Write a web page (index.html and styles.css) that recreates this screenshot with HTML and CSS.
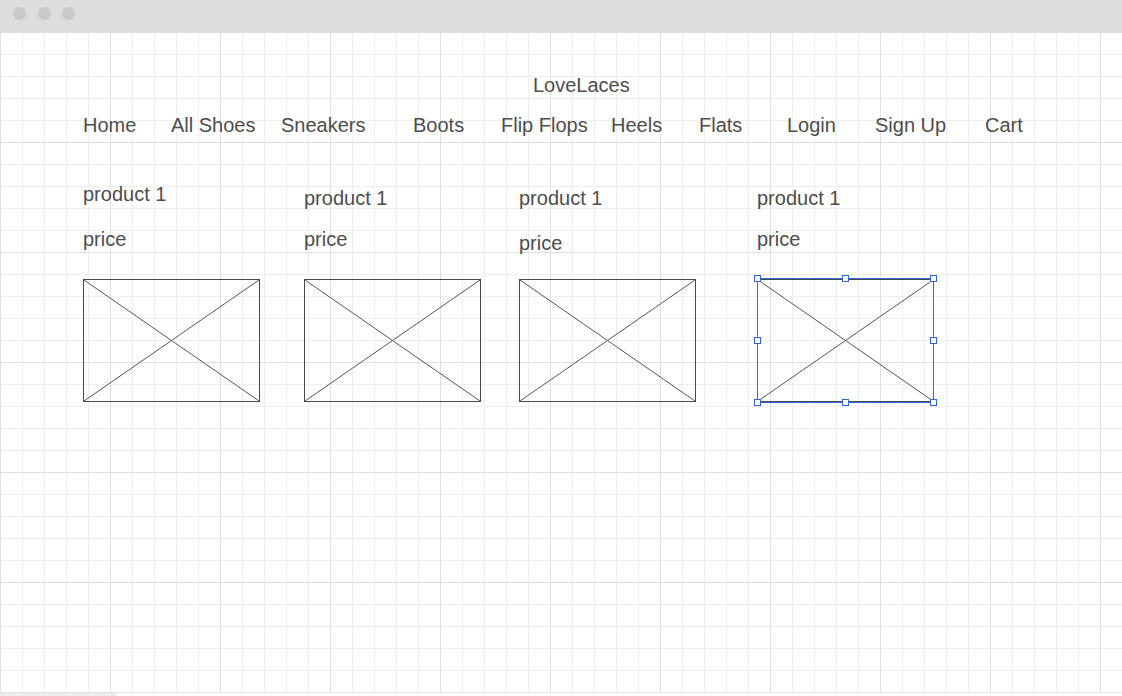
FILE: index.html
```html
<!DOCTYPE html>
<html>
<head>
    <title>LoveLaces wireframe</title>
    <link rel="stylesheet" href="styles.css">
</head>
<body>
    <div class="titlebar">
        <span class="dot"></span>
        <span class="dot"></span>
        <span class="dot"></span>
    </div>

    <div class="canvas">
        <h1 class="brand">LoveLaces</h1>

        <nav class="nav">
            <a>Home</a>
            <a>All Shoes</a>
            <a>Sneakers</a>
            <a>Boots</a>
            <a>Flip Flops</a>
            <a>Heels</a>
            <a>Flats</a>
            <a>Login</a>
            <a>Sign Up</a>
            <a>Cart</a>
        </nav>

        <div class="products">
            <div class="card">
                <p class="name">product 1</p>
                <p class="price">price</p>
                <div class="ph">
                    <svg viewBox="0 0 176 121" preserveAspectRatio="none"><line x1="0" y1="0" x2="176" y2="121"/><line x1="176" y1="0" x2="0" y2="121"/></svg>
                </div>
            </div>
            <div class="card">
                <p class="name nudge">product 1</p>
                <p class="price">price</p>
                <div class="ph">
                    <svg viewBox="0 0 176 121" preserveAspectRatio="none"><line x1="0" y1="0" x2="176" y2="121"/><line x1="176" y1="0" x2="0" y2="121"/></svg>
                </div>
            </div>
            <div class="card">
                <p class="name nudge">product 1</p>
                <p class="price nudge">price</p>
                <div class="ph">
                    <svg viewBox="0 0 176 121" preserveAspectRatio="none"><line x1="0" y1="0" x2="176" y2="121"/><line x1="176" y1="0" x2="0" y2="121"/></svg>
                </div>
            </div>
            <div class="card">
                <p class="name nudge">product 1</p>
                <p class="price">price</p>
                <div class="ph selected">
                    <svg viewBox="0 0 176 121" preserveAspectRatio="none"><line x1="0" y1="0" x2="176" y2="121"/><line x1="176" y1="0" x2="0" y2="121"/></svg>
                    <div class="selection">
                        <span class="handle tl"></span>
                        <span class="handle tc"></span>
                        <span class="handle tr"></span>
                        <span class="handle ml"></span>
                        <span class="handle mr"></span>
                        <span class="handle bl"></span>
                        <span class="handle bc"></span>
                        <span class="handle br"></span>
                    </div>
                </div>
            </div>
        </div>
    </div>

    <div class="hscroll"><div class="thumb"></div></div>
</body>
</html>
```

FILE: styles.css
```css
body {
    margin: 0;
    font-family: "Liberation Sans", Arial, sans-serif;
    color: #4d4d4d;
    overflow: hidden;
}
.titlebar {
    height: 32px;
    background: #dddddd;
    display: flex;
    align-items: flex-start;
    gap: 11.5px;
    padding: 7px 0 0 13px;
    box-sizing: border-box;
}
.dot {
    width: 13px;
    height: 13px;
    border-radius: 50%;
    background: #c9c9c9;
}
.canvas {
    height: 660px;
    box-sizing: border-box;
    padding-top: 42px;
    background-color: #fff;
    background-image:
        linear-gradient(to right, #e0e0e0 1px, transparent 1px),
        linear-gradient(to bottom, #e0e0e0 1px, transparent 1px),
        linear-gradient(to right, #efefef 1px, transparent 1px),
        linear-gradient(to bottom, #efefef 1px, transparent 1px);
    background-size: 110px 110px, 110px 110px, 22px 22px, 22px 22px;
}
.brand {
    margin: 0 0 17px 533px;
    font-size: 20px;
    font-weight: normal;
    line-height: 23px;
}
.nav {
    display: grid;
    grid-template-columns: 88px 110px 132px 88px 110px 88px 88px 88px 110px auto;
    padding-left: 83px;
    font-size: 20px;
    line-height: 23px;
}
.nav a {
    white-space: nowrap;
}
.products {
    display: grid;
    grid-template-columns: 221px 215px 238px 178px;
    padding-left: 83px;
    margin-top: 46px;
}
.card {
    display: grid;
    grid-template-rows: 45px 51px auto;
}
.name, .price {
    margin: 0;
    font-size: 20px;
    line-height: 23px;
}
.nudge {
    padding-top: 4px;
}
.ph {
    position: relative;
    width: 177px;
    height: 123px;
    box-sizing: border-box;
    border: 1px solid #4a4a4a;
}
.ph svg {
    display: block;
    width: 100%;
    height: 100%;
}
.ph line {
    stroke: #555;
    stroke-width: 1;
    vector-effect: non-scaling-stroke;
}
.selection {
    position: absolute;
    left: -1px;
    right: -1px;
    top: -2px;
    bottom: -2px;
    border: 1px solid #3168d6;
}
.handle {
    position: absolute;
    width: 7px;
    height: 7px;
    box-sizing: border-box;
    background: #fff;
    border: 1px solid #3168d6;
}
.tl { left: -4px; top: -4px; }
.tc { left: calc(50% - 3.5px); top: -4px; }
.tr { right: -4px; top: -4px; }
.ml { left: -4px; top: calc(50% - 3.5px); }
.mr { right: -4px; top: calc(50% - 3.5px); }
.bl { left: -4px; bottom: -4px; }
.bc { left: calc(50% - 3.5px); bottom: -4px; }
.br { right: -4px; bottom: -4px; }
.hscroll {
    height: 4px;
    box-sizing: border-box;
    border-top: 1px solid #e4e4e4;
    background: #fff;
}
.thumb {
    width: 116px;
    height: 100%;
    background: #ececec;
}
```
